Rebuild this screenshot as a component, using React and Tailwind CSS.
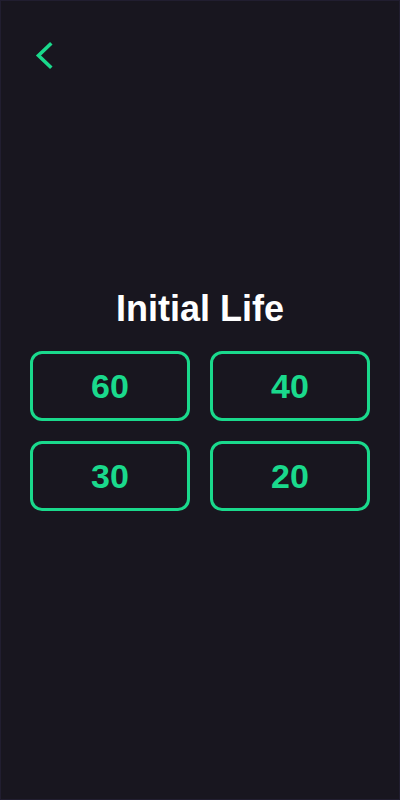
import React from 'react';

const LIFE_OPTIONS = [60, 40, 30, 20];

// Back arrow drawn to match the thin chevron in the header
const BackIcon = () => (
    <svg width="22" height="30" viewBox="0 0 22 30" fill="none">
        <polyline
            points="18,3.5 6.5,14.5 18,25.5"
            stroke="#1ad98c"
            strokeWidth="3.6"
            strokeLinecap="square"
            strokeLinejoin="miter"
        />
    </svg>
);

const App = () => {
    return (
        <div
            className="w-[400px] h-[800px] bg-[#18161f] border border-[#211e30] flex flex-col"
            style={{ fontFamily: '"Liberation Sans", Arial, sans-serif' }}
        >
            {/* Header with back button */}
            <div className="h-[100px] pl-[31px] pt-[40px]">
                <button className="block">
                    <BackIcon />
                </button>
            </div>

            {/* Centered life picker */}
            <div className="flex-1 flex flex-col justify-center px-[29px]">
                <h1 className="text-4xl leading-10 font-bold text-white text-center mb-[22px]">Initial Life</h1>
                <div className="grid grid-cols-2 gap-5">
                    {LIFE_OPTIONS.map(value => (
                        <button
                            key={value}
                            className="h-[70px] rounded-[12px] border-[3px] border-[#1ad98c] text-[#1ad98c] text-[34px] font-bold flex items-center justify-center"
                        >
                            {value}
                        </button>
                    ))}
                </div>
            </div>

            <div className="h-[100px]" />
        </div>
    );
};

export default App;
